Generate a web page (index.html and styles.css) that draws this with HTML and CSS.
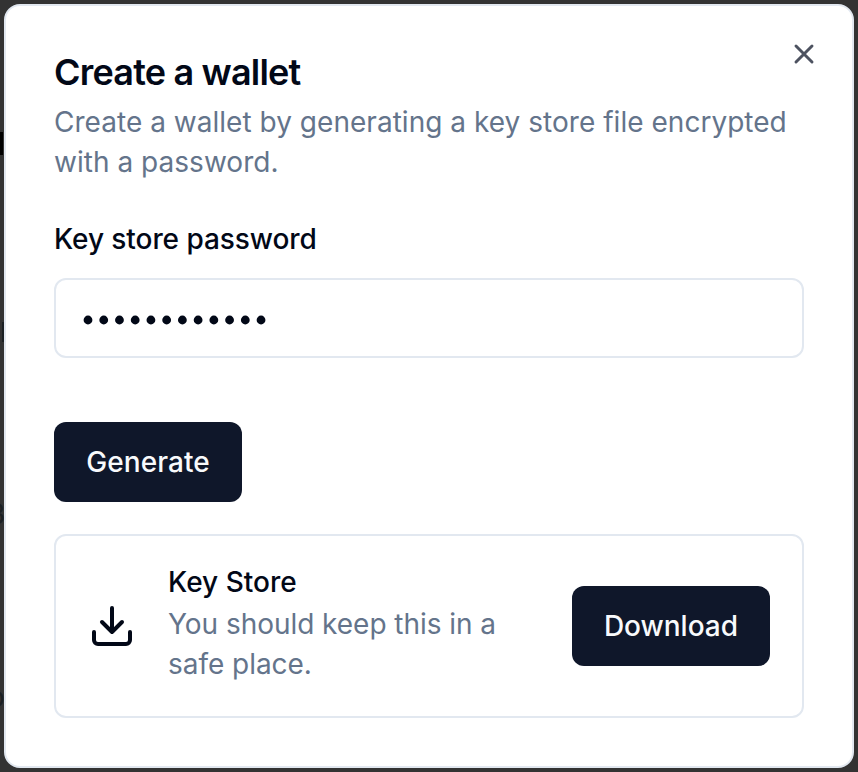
FILE: index.html
```html
<!DOCTYPE html>
<html lang="en">
<head>
<meta charset="utf-8">
<title>Create a wallet</title>
<link rel="stylesheet" href="styles.css">
</head>
<body>
<div class="backdrop" aria-hidden="true"><i class="mark heading"></i><i class="mark cell"></i><span class="glyph three">3</span><span class="glyph letter">o</span></div>
<main class="dialog">
  <header class="header">
    <h1 class="title">Create a wallet</h1>
    <p class="muted intro">Create a wallet by generating a key store file encrypted<br>with a password.</p>
  </header>
  <label class="label" for="password">Key store password</label>
  <div class="field" id="password">
    <svg class="dots" viewBox="0 0 190 12"><path d="M6 6h173.1"/></svg>
  </div>
  <button class="button generate">Generate</button>
  <section class="card">
    <svg class="icon" viewBox="0 0 24 24"><path d="M21 15v4a2 2 0 0 1-2 2H5a2 2 0 0 1-2-2v-4M7 10l5 5 5-5M12 15V3"/></svg>
    <div class="info">
      <h2 class="name">Key Store</h2>
      <p class="muted">You should keep this in a<br>safe place.</p>
    </div>
    <button class="button download">Download</button>
  </section>
  <button class="close" aria-label="Close"><svg viewBox="0 0 24 24"><path d="M18 6 6 18M6 6l12 12"/></svg></button>
</main>
</body>
</html>
```
FILE: styles.css
```css
* { box-sizing: border-box; margin: 0; }
body { height: 772px; padding: 4px; background: #333; font-family: Inter, sans-serif; color: #020817; overflow: hidden; }
.backdrop { position: absolute; inset: 0; overflow: hidden; }
.mark { position: absolute; left: 0; width: 3px; height: 23px; top: 132px; background: #000; }
.cell { left: 2px; top: 322px; height: 20px; background: #1b2023; }
.glyph { position: absolute; left: -12px; font-size: 28px; line-height: 32px; color: #1b2023; }
.three { top: 498px; }
.letter { top: 681px; }
.dialog { position: relative; height: 764px; width: 850px; padding: 48px; border: 2px solid #e2e8f0; border-radius: 16px; background: #fff; display: flex; flex-direction: column; align-items: flex-start; }
.title { font-size: 36px; line-height: 36px; font-weight: 600; letter-spacing: -0.8px; margin-bottom: 12px; }
.muted { font-size: 28px; line-height: 40px; color: #64748b; white-space: nowrap; letter-spacing: -0.04px; }
.intro { letter-spacing: 0.03px; }
.label { margin-top: 43px; font-size: 28px; line-height: 28px; font-weight: 500; letter-spacing: -0.07px; }
.field { display: flex; align-items: center; width: 750px; height: 80px; margin-top: 25px; padding: 4px 26px 0; border: 2px solid #e2e8f0; border-radius: 12px; }
.button { height: 80px; border: 0; border-radius: 12px; background: #0f172a; color: #f8fafc; font: 500 28px/40px Inter, sans-serif; }
.generate { width: 188px; margin-top: 64px; letter-spacing: 0.08px; }
.card { display: flex; align-items: center; width: 750px; height: 184px; margin-top: 32px; padding: 0 32px; border: 2px solid #e2e8f0; border-radius: 12px; }
svg { fill: none; stroke: currentColor; stroke-width: 2; stroke-linecap: round; stroke-linejoin: round; }
.icon { width: 48px; height: 48px; margin-right: 32px; }
.dots { width: 190px; height: 12px; stroke-width: 8.8; stroke-dasharray: 0.01 15.72; }
.info { flex: 1; margin-top: -6px; }
.name { font-size: 28px; line-height: 40px; margin-bottom: 2px; font-weight: 500; }
.download { width: 198px; }
.close { position: absolute; top: 32px; right: 32px; width: 32px; height: 32px; padding: 0; border: 0; background: none; color: #4d5260; }
.close svg { display: block; width: 32px; height: 32px; stroke-width: 2.2; }
```
